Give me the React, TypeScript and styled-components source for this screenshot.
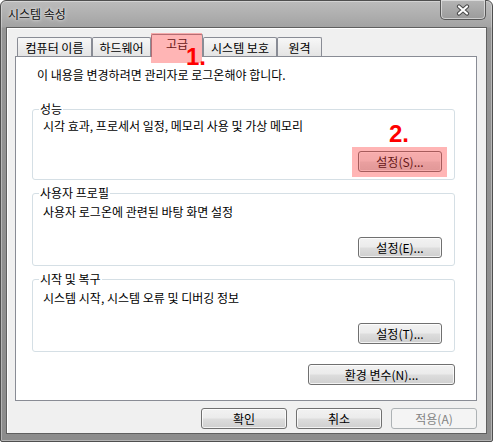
import React from "react";
import styled, { createGlobalStyle } from "styled-components";

const GlobalStyle = createGlobalStyle`
  html, body { margin: 0; padding: 0; background: #ffffff; }
  body {
    font-family: "Noto Sans CJK KR", "Noto Sans", sans-serif;
    font-size: 12px;
    color: #000;
  }
  * { box-sizing: border-box; }
`;

const Window = styled.div`
  width: 493px;
  height: 442px;
  border: 1px solid #4f4f4f;
  border-radius: 6px 6px 2px 2px;
  background: linear-gradient(#bcbcbc 0px, #a3a3a3 26px, #959595 27px, #8c8c8c 100%);
  box-shadow: inset 0 0 0 1px rgba(255, 255, 255, 0.35);
  padding: 0 5px 7px 5px;
  display: flex;
  flex-direction: column;
`;

const TitleBar = styled.div`
  height: 26px;
  display: flex;
  align-items: flex-start;
  justify-content: space-between;
`;

const TitleText = styled.div`
  padding: 5px 0 0 2px;
  line-height: 16px;
  font-size: 12px;
  color: #111;
  text-shadow: 0 0 4px rgba(255, 255, 255, 0.85), 0 0 2px rgba(255, 255, 255, 0.6);
`;

const CloseButton = styled.div`
  width: 46px;
  height: 20px;
  margin: -1px 1px 0 0;
  border: 1px solid #575757;
  border-top: none;
  border-radius: 0 0 5px 5px;
  background: linear-gradient(#b5b5b5, #9b9b9b);
  box-shadow: inset 0 0 0 1px rgba(255, 255, 255, 0.5);
  display: flex;
  align-items: center;
  justify-content: center;
`;

const Client = styled.div`
  flex: 1;
  border: 1px solid #5f5f5f;
  background: #f0f0f0;
  box-shadow: inset 1px 1px 0 #ffffff;
  padding: 6px 9px 4px 8px;
  display: flex;
  flex-direction: column;
`;

const TabStrip = styled.div`
  height: 22px;
  display: flex;
  align-items: flex-end;
  padding-left: 2px;
`;

const Tab = styled.div<{ $w: number; $active?: boolean }>`
  position: relative;
  width: ${(p) => p.$w}px;
  height: ${(p) => (p.$active ? 23 : 19)}px;
  margin-bottom: ${(p) => (p.$active ? -1 : 0)}px;
  z-index: ${(p) => (p.$active ? 1 : 0)};
  border: 1px solid #898c95;
  border-bottom: none;
  border-radius: 2px 2px 0 0;
  background: ${(p) => (p.$active ? "#ffffff" : "linear-gradient(#f7f7f7, #e4e4e4)")};
  display: flex;
  justify-content: center;
  align-items: flex-start;
  padding-top: ${(p) => (p.$active ? 1 : 2)}px;
  line-height: 16px;
  white-space: nowrap;
`;

const TabHighlight = styled.div`
  position: absolute;
  left: -1px;
  top: -2px;
  width: 51px;
  height: 30px;
  background: rgba(255, 60, 60, 0.38);
  pointer-events: none;
`;

const Marker = styled.div<{ $left: number; $top: number }>`
  position: absolute;
  left: ${(p) => p.$left}px;
  top: ${(p) => p.$top}px;
  font-family: "Liberation Sans", Arial, sans-serif;
  font-weight: bold;
  font-size: 24px;
  line-height: 17px;
  color: #ff0000;
  z-index: 2;
  pointer-events: none;
`;

const Panel = styled.div`
  border: 1px solid #898c95;
  background: #ffffff;
  padding: 10px 21px 15px 16px;
  display: flex;
  flex-direction: column;
`;

const Info = styled.div`
  line-height: 16px;
  margin: 0 0 18px 5px;
`;

const GroupBox = styled.fieldset<{ $gap: number }>`
  margin: 0 0 ${(p) => p.$gap}px 0;
  padding: 0;
  min-width: 0;
  border: 1px solid #d5dfe5;
  border-radius: 3px;
`;

const Legend = styled.legend`
  padding: 0 1px;
  margin-left: 6px;
  line-height: 16px;
  font-size: 12px;
`;

const GroupBody = styled.div<{ $top: number }>`
  padding: ${(p) => p.$top}px 12px 7px 10px;
  display: flex;
  flex-direction: column;
`;

const Desc = styled.div`
  line-height: 16px;
`;

const ButtonRow = styled.div<{ $top: number }>`
  display: flex;
  justify-content: flex-end;
  gap: 9px;
  margin-top: ${(p) => p.$top}px;
`;

const Anchor = styled.div`
  position: relative;
  display: flex;
`;

const ButtonHighlight = styled.div`
  position: absolute;
  left: -6px;
  top: -4px;
  width: 95px;
  height: 30px;
  background: rgba(255, 60, 60, 0.38);
  pointer-events: none;
`;

const Button = styled.button<{ $w: number }>`
  width: ${(p) => p.$w}px;
  height: 21px;
  padding: 0;
  border: 1px solid #707070;
  border-radius: 3px;
  background: linear-gradient(#f2f2f2 0%, #ebebeb 48%, #dddddd 52%, #cfcfcf 100%);
  box-shadow: inset 0 0 0 1px rgba(255, 255, 255, 0.75);
  font-family: "Noto Sans CJK KR", "Noto Sans", sans-serif;
  font-size: 12px;
  line-height: 19px;
  color: #000;
  white-space: nowrap;

  &:disabled {
    border-color: #adb2b5;
    background: #f4f4f4;
    box-shadow: none;
    color: #838383;
  }
`;

const Footer = styled.div`
  display: flex;
  justify-content: flex-end;
  gap: 9px;
  margin-top: 7px;
`;

const CloseIcon = () => (
  <svg width="14" height="12" viewBox="0 0 14 12">
    <path d="M3 2.5 L11 9.5 M11 2.5 L3 9.5" stroke="#4a4a4a" strokeWidth="4.2" strokeLinecap="round" />
    <path d="M3 2.5 L11 9.5 M11 2.5 L3 9.5" stroke="#ffffff" strokeWidth="2.2" strokeLinecap="round" />
  </svg>
);

const tabs = [
  { label: "컴퓨터 이름", w: 75 },
  { label: "하드웨어", w: 59 },
  { label: "고급", w: 52, active: true },
  { label: "시스템 보호", w: 74 },
  { label: "원격", w: 45 },
];

export default function App() {
  return (
    <>
      <GlobalStyle />
      <Window>
        <TitleBar>
          <TitleText>시스템 속성</TitleText>
          <CloseButton>
            <CloseIcon />
          </CloseButton>
        </TitleBar>
        <Client>
          <TabStrip>
            {tabs.map((t) => (
              <Tab key={t.label} $w={t.w} $active={t.active}>
                {t.label}
                {t.active && (
                  <>
                    <TabHighlight />
                    <Marker $left={34} $top={13}>
                      1.
                    </Marker>
                  </>
                )}
              </Tab>
            ))}
          </TabStrip>
          <Panel>
            <Info>이 내용을 변경하려면 관리자로 로그온해야 합니다.</Info>

            <GroupBox $gap={5}>
              <Legend>성능</Legend>
              <GroupBody $top={1}>
                <Desc>시각 효과, 프로세서 일정, 메모리 사용 및 가상 메모리</Desc>
                <ButtonRow $top={17}>
                  <Anchor>
                    <Marker $left={31} $top={-26}>
                      2.
                    </Marker>
                    <Button $w={84}>설정(S)...</Button>
                    <ButtonHighlight />
                  </Anchor>
                </ButtonRow>
              </GroupBody>
            </GroupBox>

            <GroupBox $gap={5}>
              <Legend>사용자 프로필</Legend>
              <GroupBody $top={3}>
                <Desc>사용자 로그온에 관련된 바탕 화면 설정</Desc>
                <ButtonRow $top={17}>
                  <Button $w={84}>설정(E)...</Button>
                </ButtonRow>
              </GroupBody>
            </GroupBox>

            <GroupBox $gap={12}>
              <Legend>시작 및 복구</Legend>
              <GroupBody $top={3}>
                <Desc>시스템 시작, 시스템 오류 및 디버깅 정보</Desc>
                <ButtonRow $top={17}>
                  <Button $w={84}>설정(T)...</Button>
                </ButtonRow>
              </GroupBody>
            </GroupBox>

            <ButtonRow $top={0}>
              <Button $w={147}>환경 변수(N)...</Button>
            </ButtonRow>
          </Panel>
          <Footer>
            <Button $w={86}>확인</Button>
            <Button $w={86}>취소</Button>
            <Button $w={86} disabled>
              적용(A)
            </Button>
          </Footer>
        </Client>
      </Window>
    </>
  );
}
